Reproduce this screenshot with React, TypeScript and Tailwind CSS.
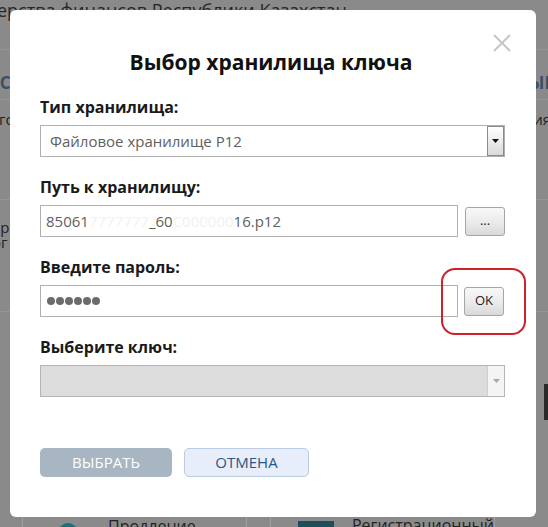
import React from "react";

const font = { fontFamily: '"Open Sans", "Noto Sans", sans-serif' };

function Backdrop() {
  return (
    <div className="absolute inset-0 flex flex-col bg-[#8a8a8a]">
      <div className="h-[52px] -mt-[2px] border-b border-[#959595] shrink-0">
        <div className="-ml-[3px] text-[18px] leading-[24px] text-[#262626] whitespace-nowrap">
          ерства финансов Республики Казахстан
        </div>
      </div>
      <div className="h-[50px] shrink-0 flex items-start justify-between border-b border-[#959595] pt-[22px]">
        <span className="-ml-[6px] text-[17px] leading-[22px] font-bold text-[#3a4f66]">ІС</span>
        <span className="-mr-[6px] text-[17px] leading-[22px] font-bold text-[#3a4f66]">ЫЕ</span>
      </div>
      <div className="h-[100px] shrink-0 flex justify-between border-b border-[#959595] pt-[8px]">
        <span className="-ml-[10px] text-[15px] text-[#222]">ого</span>
        <span className="-mr-[3px] text-[15px] text-[#222]">ия</span>
      </div>
      <div className="h-[112px] shrink-0 flex justify-between border-b border-[#959595] pt-[20px]">
        <span className="-ml-[8px] text-[15px] leading-[15px] text-[#222]">ар<br />ог</span>
        <span></span>
      </div>
      <div className="h-[200px] shrink-0 flex justify-end pt-[72px]">
        <div className="w-[4px] h-[36px] bg-[#2a2a2a]"></div>
      </div>
      <div className="flex gap-[23px] pl-[22px] pt-[3px]">
        <div className="w-[225px] h-[40px] border-x border-[#a0a0a0] flex gap-[30px] pl-[35px] pt-[8px]">
          <div className="w-[20px] h-[20px] rounded-full bg-[#1f6f7a]"></div>
          <span className="text-[16px] text-[#222] -mt-[9px]">Продление</span>
        </div>
        <div className="w-[225px] h-[40px] border-x border-[#a0a0a0] flex gap-[18px] pl-[27px] pt-[6px]">
          <div className="w-[42px] h-[20px] bg-[#1d4e59]"></div>
          <span className="text-[16px] text-[#222] -mt-[8px]">Регистрационный</span>
        </div>
      </div>
    </div>
  );
}

function SelectArrow({ disabled }: { disabled?: boolean }) {
  return (
    <div
      className={
        disabled
          ? "w-[17px] self-stretch border-l border-[#cfcfcf] bg-[#f4f4f4] flex items-center justify-center"
          : "w-[17px] self-stretch border border-[#8a8a8a] bg-gradient-to-b from-[#ffffff] to-[#dadada] flex items-center justify-center"
      }
    >
      <svg width="7" height="4" viewBox="0 0 7 4">
        <path d="M0 0 L7 0 L3.5 4 Z" fill={disabled ? "#a8a8a8" : "#111"} />
      </svg>
    </div>
  );
}

function SmallButton({ children }: { children: React.ReactNode }) {
  return (
    <div className="w-[40px] h-[29px] shrink-0 rounded-[3px] border border-[#a5a5a5] bg-gradient-to-b from-[#f7f7f7] via-[#ececec] to-[#d9d9d9] flex items-center justify-center text-[13px] text-[#222]">
      {children}
    </div>
  );
}

export default function App() {
  return (
    <div className="relative w-[548px] h-[527px] overflow-hidden" style={font}>
      <Backdrop />
      <div className="absolute inset-0 pt-[10px] pl-[10px]">
        <div className="relative w-[526px] h-[507px] bg-white rounded-[6px] px-[30px] pt-[38px] flex flex-col">
          <svg
            className="absolute right-[25px] top-[24px]"
            width="18"
            height="18"
            viewBox="0 0 18 18"
          >
            <path d="M1 1 L17 17 M17 1 L1 17" stroke="#c6c6c6" strokeWidth="2" />
          </svg>

          <h1 className="text-[21px] leading-[28px] font-bold text-[#111] text-center pr-[4px]">
            Выбор хранилища ключа
          </h1>

          <div className="mt-[21px] flex flex-col">
            <label className="text-[16px] leading-[20px] font-bold text-[#1a1a1a]">Тип хранилища:</label>
            <div className="mt-[8px] h-[32px] w-[465px] border border-[#b0b0b0] flex items-center">
              <span className="flex-1 pl-[9px] text-[15px] text-[#606060]">Файловое хранилище P12</span>
              <SelectArrow />
            </div>
          </div>

          <div className="mt-[20px] flex flex-col">
            <label className="text-[16px] leading-[20px] font-bold text-[#1a1a1a]">Путь к хранилищу:</label>
            <div className="mt-[8px] flex items-center gap-[7px] w-[465px]">
              <div className="flex-1 h-[32px] border border-[#b0b0b0] flex items-center pl-[5px] text-[15px] text-[#606060] whitespace-nowrap overflow-hidden">
                <span>85061</span>
                <span className="text-[#f1f1f1]">7777777</span>
                <span>_60</span>
                <span className="text-[#f1f1f1]">C000000</span>
                <span>16.p12</span>
              </div>
              <SmallButton>
                <span className="leading-none pb-[2px]">...</span>
              </SmallButton>
            </div>
          </div>

          <div className="mt-[20px] flex flex-col">
            <label className="text-[16px] leading-[20px] font-bold text-[#1a1a1a]">Введите пароль:</label>
            <div className="mt-[8px] flex items-center gap-[6px] w-[464px]">
              <div className="flex-1 h-[32px] border border-[#b0b0b0] flex items-center pl-[6px] gap-[1px]">
                <span className="w-[8px] h-[8px] rounded-full bg-[#6b6b6b]"></span>
                <span className="w-[8px] h-[8px] rounded-full bg-[#6b6b6b]"></span>
                <span className="w-[8px] h-[8px] rounded-full bg-[#6b6b6b]"></span>
                <span className="w-[8px] h-[8px] rounded-full bg-[#6b6b6b]"></span>
                <span className="w-[8px] h-[8px] rounded-full bg-[#6b6b6b]"></span>
                <span className="w-[8px] h-[8px] rounded-full bg-[#6b6b6b]"></span>
              </div>
              <SmallButton>OK</SmallButton>
            </div>
          </div>

          <div className="mt-[20px] flex flex-col">
            <label className="text-[16px] leading-[20px] font-bold text-[#1a1a1a]">Выберите ключ:</label>
            <div className="mt-[8px] h-[32px] w-[465px] border border-[#b5b5b5] bg-[#dcdcdc] flex items-center justify-end">
              <SelectArrow disabled />
            </div>
          </div>

          <div className="mt-[51px] flex gap-[12px]">
            <div className="w-[132px] h-[29px] rounded-[5px] bg-[#a8b6c3] flex items-center justify-center text-[15px] text-white">
              ВЫБРАТЬ
            </div>
            <div className="w-[125px] h-[29px] rounded-[5px] border-[1.5px] border-[#bacbe5] bg-[#e8eef9] flex items-center justify-center text-[15px] text-[#2b5585]">
              ОТМЕНА
            </div>
          </div>

          <div className="absolute left-[431px] top-[258px] w-[85px] h-[67px] rounded-[14px] border-[2.5px] border-[#d0202a]"></div>
        </div>
      </div>
    </div>
  );
}
